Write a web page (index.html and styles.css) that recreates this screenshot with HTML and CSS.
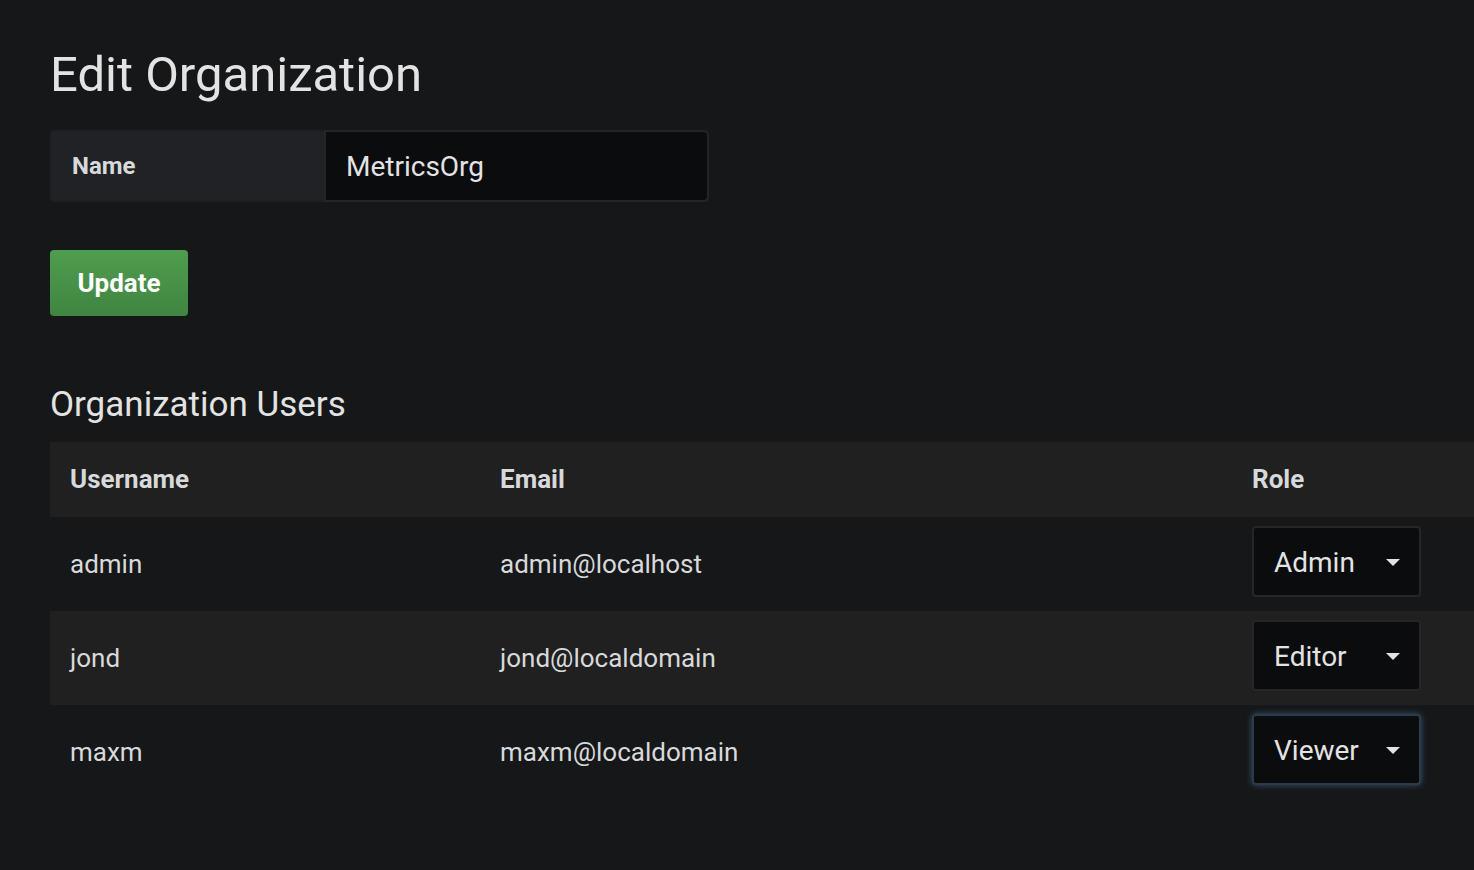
FILE: index.html
```html
<!DOCTYPE html>
<html>
<head>
<meta charset="utf-8">
<link rel="stylesheet" href="styles.css">
</head>
<body>
<main class="page">
  <h1 class="page-title">Edit Organization</h1>
  <div class="form-row">
    <div class="form-label">Name</div>
    <div class="form-input">MetricsOrg</div>
  </div>
  <button class="btn-update">Update</button>
  <h2 class="section-title">Organization Users</h2>
  <div class="users-table">
    <div class="trow thead">
      <div class="cell">Username</div>
      <div class="cell">Email</div>
      <div class="cell">Role</div>
    </div>
    <div class="trow">
      <div class="cell">admin</div>
      <div class="cell">admin@localhost</div>
      <div class="cell role-cell"><div class="role-select"><span>Admin</span><span class="caret"></span></div></div>
    </div>
    <div class="trow alt">
      <div class="cell">jond</div>
      <div class="cell">jond@localdomain</div>
      <div class="cell role-cell"><div class="role-select"><span>Editor</span><span class="caret"></span></div></div>
    </div>
    <div class="trow">
      <div class="cell">maxm</div>
      <div class="cell">maxm@localdomain</div>
      <div class="cell role-cell"><div class="role-select focused"><span>Viewer</span><span class="caret"></span></div></div>
    </div>
  </div>
</main>
</body>
</html>
```
FILE: styles.css
```css
html, body {
  margin: 0;
  padding: 0;
  background: #161719;
}
body {
  font-family: Roboto, "Liberation Sans", sans-serif;
  color: #d8d9da;
  overflow: hidden;
}
.page {
  padding: 44px 0 0 50px;
}
.page-title {
  margin: 0;
  font-size: 49px;
  font-weight: 400;
  line-height: 62px;
  color: #e3e3e3;
}
.form-row {
  margin-top: 24px;
  display: flex;
  width: 659px;
  height: 72px;
  box-sizing: border-box;
  border-radius: 4px;
  background: #202226;
  border: 2px solid #1f2023;
}
.form-label {
  width: 274px;
  display: flex;
  align-items: center;
  padding-left: 20px;
  box-sizing: border-box;
  font-size: 24px;
  font-weight: 700;
  color: #d8d9da;
}
.form-input {
  flex: 1;
  display: flex;
  align-items: center;
  padding-left: 20px;
  background: #0b0c0e;
  border-radius: 0 4px 4px 0;
  box-shadow: 0 0 0 2px #242528;
  font-size: 28px;
  color: #e3e3e3;
}
.btn-update {
  display: block;
  margin-top: 48px;
  width: 138px;
  height: 66px;
  border: 0;
  border-radius: 4px;
  background: linear-gradient(#4f9d4f, #3f8541);
  color: #fff;
  font-family: Roboto, "Liberation Sans", sans-serif;
  font-size: 26px;
  font-weight: 700;
  padding: 0;
}
.section-title {
  margin: 68px 0 0;
  font-size: 35px;
  font-weight: 400;
  line-height: 42px;
  color: #e3e3e3;
}
.users-table {
  margin-top: 16px;
}
.trow {
  display: grid;
  grid-template-columns: 430px 752px 1fr;
  height: 94px;
  align-items: center;
  font-size: 26px;
}
.thead {
  height: 75px;
  background: #202020;
  font-weight: 700;
}
.thead .cell {
  padding-bottom: 2px;
}
.trow.alt {
  background: #202020;
}
.cell {
  padding-left: 20px;
}
.role-cell {
  align-self: start;
  padding-top: 9px;
}
.role-select {
  width: 169px;
  height: 71px;
  box-sizing: border-box;
  border: 2px solid #262628;
  border-radius: 4px;
  background: #0b0c0e;
  display: flex;
  align-items: center;
  justify-content: space-between;
  padding: 2px 19px 0 20px;
  font-size: 28px;
  color: #e3e3e3;
}
.role-select.focused {
  border-color: #2b3a4c;
  box-shadow: 0 0 6px rgba(82, 130, 180, 0.55);
}
.caret {
  width: 0;
  height: 0;
  border-left: 7px solid transparent;
  border-right: 7px solid transparent;
  border-top: 7px solid #e3e3e3;
}
```
